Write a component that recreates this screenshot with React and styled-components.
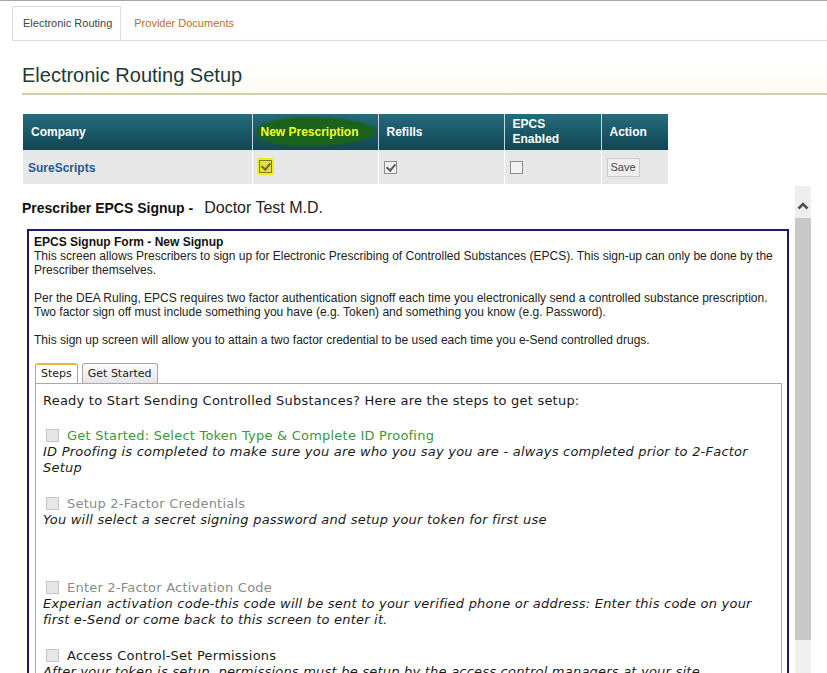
import React from "react";
import styled, { createGlobalStyle } from "styled-components";

const GlobalStyle = createGlobalStyle`
  html, body {
    margin: 0;
    padding: 0;
    background: #ffffff;
  }
  body {
    font-family: "Liberation Sans", Arial, sans-serif;
    overflow: hidden;
  }
`;

const steps = [
  {
    label: "Get Started: Select Token Type & Complete ID Proofing",
    tone: "green",
    text: "ID Proofing is completed to make sure you are who you say you are - always completed prior to 2-Factor Setup",
  },
  {
    label: "Setup 2-Factor Credentials",
    tone: "gray",
    text: "You will select a secret signing password and setup your token for first use",
    tall: true,
  },
  {
    label: "Enter 2-Factor Activation Code",
    tone: "gray",
    text: "Experian activation code-this code will be sent to your verified phone or address: Enter this code on your first e-Send or come back to this screen to enter it.",
  },
  {
    label: "Access Control-Set Permissions",
    tone: "dark",
    text: "After your token is setup, permissions must be setup by the access control managers at your site.",
  },
];

const App = () => {
  return (
    <Page>
      <GlobalStyle />
      <TabStrip>
        <PageTab $active>Electronic Routing</PageTab>
        <PageTab>Provider Documents</PageTab>
      </TabStrip>

      <TitleBar>
        <h1>Electronic Routing Setup</h1>
      </TitleBar>

      <RoutingTable>
        <colgroup>
          <col style={{ width: 229 }} />
          <col style={{ width: 126 }} />
          <col style={{ width: 126 }} />
          <col style={{ width: 97 }} />
          <col style={{ width: 67 }} />
        </colgroup>
        <thead>
          <tr>
            <th>Company</th>
            <th>
              <Marker>New Prescription</Marker>
            </th>
            <th>Refills</th>
            <th>
              EPCS
              <br />
              Enabled
            </th>
            <th>Action</th>
          </tr>
        </thead>
        <tbody>
          <tr>
            <td>
              <CompanyName>SureScripts</CompanyName>
            </td>
            <td>
              <YellowMark>
                <Check $checked $tint />
              </YellowMark>
            </td>
            <td>
              <Check $checked />
            </td>
            <td>
              <Check />
            </td>
            <td>
              <SaveButton>Save</SaveButton>
            </td>
          </tr>
        </tbody>
      </RoutingTable>

      <ScrollArea>
        <ScrollContent>
          <SignupHeading>
            <strong>Prescriber EPCS Signup -</strong>
            <span>Doctor Test M.D.</span>
          </SignupHeading>

          <FormBox>
            <FormTitle>EPCS Signup Form - New Signup</FormTitle>
            <FormText>
              This screen allows Prescribers to sign up for Electronic Prescribing of
              Controlled Substances (EPCS). This sign-up can only be done by the
              Prescriber themselves.
            </FormText>
            <FormText>
              Per the DEA Ruling, EPCS requires two factor authentication signoff each
              time you electronically send a controlled substance prescription.
              <br />
              Two factor sign off must include something you have (e.g. Token) and
              something you know (e.g. Password).
            </FormText>
            <FormText>
              This sign up screen will allow you to attain a two factor credential to be
              used each time you e-Send controlled drugs.
            </FormText>

            <SubTabs>
              <SubTab $active>Steps</SubTab>
              <SubTab>Get Started</SubTab>
            </SubTabs>

            <StepsPanel>
              <Intro>
                Ready to Start Sending Controlled Substances? Here are the steps to get
                setup:
              </Intro>
              {steps.map((step) => (
                <Step key={step.label}>
                  <StepLabel $tone={step.tone}>
                    <StepBox />
                    {step.label}
                  </StepLabel>
                  <StepText $tall={step.tall}>{step.text}</StepText>
                </Step>
              ))}
            </StepsPanel>
          </FormBox>
        </ScrollContent>

        <ScrollBar>
          <ScrollButton>
            <svg width="12" height="9" viewBox="0 0 12 9">
              <path
                d="M1.5 7.5 L6 3 L10.5 7.5"
                fill="none"
                stroke="#4e4e4e"
                strokeWidth="2.6"
              />
            </svg>
          </ScrollButton>
          <ScrollThumb />
          <ScrollTrack />
        </ScrollBar>
      </ScrollArea>
    </Page>
  );
};

const Page = styled.div`
  width: 827px;
  height: 673px;
  border-top: 1px solid #a6a6a6;
  box-sizing: border-box;
  overflow: hidden;
`;

const TabStrip = styled.div`
  display: flex;
  margin-left: 12px;
  padding-top: 5px;
  border-bottom: 1px solid #dcdcdc;
  background: linear-gradient(#ffffff 60%, #fdfdfb);
`;

const PageTab = styled.div`
  box-sizing: border-box;
  height: 34px;
  padding: 0 ${(p) => (p.$active ? "8px 2px 10px" : "12px 0 12px")};
  display: flex;
  align-items: center;
  padding-bottom: 2px;
  font-size: 11px;
  color: ${(p) => (p.$active ? "#444444" : "#b8702a")};
  border: 1px solid ${(p) => (p.$active ? "#dddddd" : "transparent")};
  border-bottom: none;
`;

const TitleBar = styled.div`
  margin-left: 22px;
  padding: 22px 0 6px;
  border-bottom: 2px solid #ccd1ad;
  background: linear-gradient(#ffffff 40%, #fdfcf1);

  h1 {
    margin: 0;
    font-size: 20px;
    line-height: 24px;
    font-weight: normal;
    color: #1b3a3c;
  }
`;

const RoutingTable = styled.table`
  margin: 19px 0 0 23px;
  width: 645px;
  border-collapse: collapse;
  table-layout: fixed;

  th {
    height: 36px;
    padding: 0 8px;
    text-align: left;
    font-size: 12px;
    line-height: 15px;
    font-weight: bold;
    color: #ffffff;
    background: linear-gradient(#236c7c, #1a5766 55%, #134552);
    border-left: 1px solid #c9d6da;
  }

  th:first-child,
  td:first-child {
    border-left: none;
  }

  td {
    height: 34px;
    padding: 0 5px;
    background: #e7e7e7;
    border-left: 1px solid #ffffff;
    vertical-align: middle;
  }
`;

const Marker = styled.span`
  position: relative;
  z-index: 0;
  color: #f4ff2c;

  &::before {
    content: "";
    position: absolute;
    z-index: -1;
    left: -5px;
    right: -17px;
    top: -8px;
    bottom: -7px;
    background: #1b621a;
    border-radius: 40% 60% 55% 35% / 55% 50% 50% 45%;
    filter: blur(0.8px);
  }
`;

const CompanyName = styled.span`
  font-size: 12px;
  font-weight: bold;
  color: #1f5c96;
`;

const Check = styled.span`
  display: inline-block;
  box-sizing: border-box;
  width: 13px;
  height: 13px;
  vertical-align: middle;
  border: 1px solid ${(p) => (p.$tint ? "#7a7a3a" : "#8e8e8e")};
  background: ${(p) => (p.$tint ? "#e0e040" : "#f2f2f2")};
  position: relative;

  &::after {
    content: "";
    display: ${(p) => (p.$checked ? "block" : "none")};
    position: absolute;
    left: 3px;
    top: 0px;
    width: 4px;
    height: 7px;
    border: solid ${(p) => (p.$tint ? "#6a6a20" : "#5c5c5c")};
    border-width: 0 2px 2px 0;
    transform: rotate(40deg);
  }
`;

const YellowMark = styled.span`
  display: inline-flex;
  padding: 2px;
  margin-left: -1px;
  background: #eeee12;
  border-radius: 2px;
`;

const SaveButton = styled.button`
  font-family: "Liberation Sans", Arial, sans-serif;
  font-size: 11px;
  color: #444444;
  height: 19px;
  padding: 0 3px;
  margin-top: -5px;
  background: #efefef;
  border: 1px solid #cccccc;
  border-radius: 0;
`;

const ScrollArea = styled.div`
  display: flex;
  margin: 2px 0 0 22px;
  width: 789px;
  height: 487px;
  overflow: hidden;
`;

const ScrollContent = styled.div`
  flex: 1;
  padding-top: 14px;
  min-width: 0;
`;

const SignupHeading = styled.div`
  display: flex;
  align-items: center;
  gap: 11px;
  height: 16px;

  strong {
    font-size: 14px;
    color: #111111;
  }

  span {
    font-size: 16px;
    color: #222222;
  }
`;

const FormBox = styled.div`
  margin: 13px 6px 0 5px;
  border: 2px solid #1b1b63;
  padding: 4px 5px 20px;
  font-size: 12px;
  line-height: 14px;
  color: #222222;
`;

const FormTitle = styled.div`
  font-weight: bold;
  color: #111111;
`;

const FormText = styled.p`
  margin: 0 0 14px;

  &:last-of-type {
    margin-bottom: 16px;
  }
`;

const SubTabs = styled.div`
  display: flex;
  gap: 4px;
  margin-left: 1px;
  height: 20px;
`;

const SubTab = styled.div`
  box-sizing: border-box;
  height: 20px;
  padding: 0 5px;
  display: flex;
  align-items: center;
  font-family: "DejaVu Sans", Verdana, sans-serif;
  font-size: 11px;
  color: #222222;
  border: 1px solid #a8a8a8;
  border-bottom: none;
  border-top: ${(p) => (p.$active ? "2px solid #f0b443" : "1px solid #a8a8a8")};
  border-radius: 3px 3px 0 0;
  background: ${(p) =>
    p.$active ? "#ffffff" : "linear-gradient(#fbfbfb, #e4e4ea)"};
`;

const StepsPanel = styled.div`
  margin-left: 1px;
  border: 1px solid #a8a8a8;
  padding: 9px 8px 0 7px;
  font-family: "DejaVu Sans", Verdana, sans-serif;
  font-size: 13px;
  letter-spacing: 0.22px;
  line-height: 16px;
  color: #1a1a1a;
  height: 400px;
`;

const Intro = styled.div`
  margin-bottom: 19px;
`;

const Step = styled.div`
  margin-bottom: 20px;
`;

const toneColors = {
  green: "#3a973a",
  gray: "#8a8a8a",
  dark: "#1a1a1a",
};

const StepLabel = styled.div`
  display: flex;
  align-items: center;
  gap: 8px;
  color: ${(p) => toneColors[p.$tone]};
`;

const StepBox = styled.span`
  box-sizing: border-box;
  width: 13px;
  height: 13px;
  margin: -2px 0 0 3px;
  background: #e6e6e6;
  border: 1px solid #c6c6c6;
`;

const StepText = styled.div`
  font-style: italic;
  padding-bottom: ${(p) => (p.$tall ? "32px" : "0")};
`;

const ScrollBar = styled.div`
  width: 16px;
  display: flex;
  flex-direction: column;
  background: #f0f0f0;
`;

const ScrollButton = styled.div`
  height: 32px;
  display: flex;
  justify-content: center;
  align-items: flex-end;
  padding-bottom: 8px;
  box-sizing: border-box;
  background: #eeeeee;
`;

const ScrollThumb = styled.div`
  height: 422px;
  background: #c8c8c8;
`;

const ScrollTrack = styled.div`
  flex: 1;
  background: #f0f0f0;
`;

export default App;
